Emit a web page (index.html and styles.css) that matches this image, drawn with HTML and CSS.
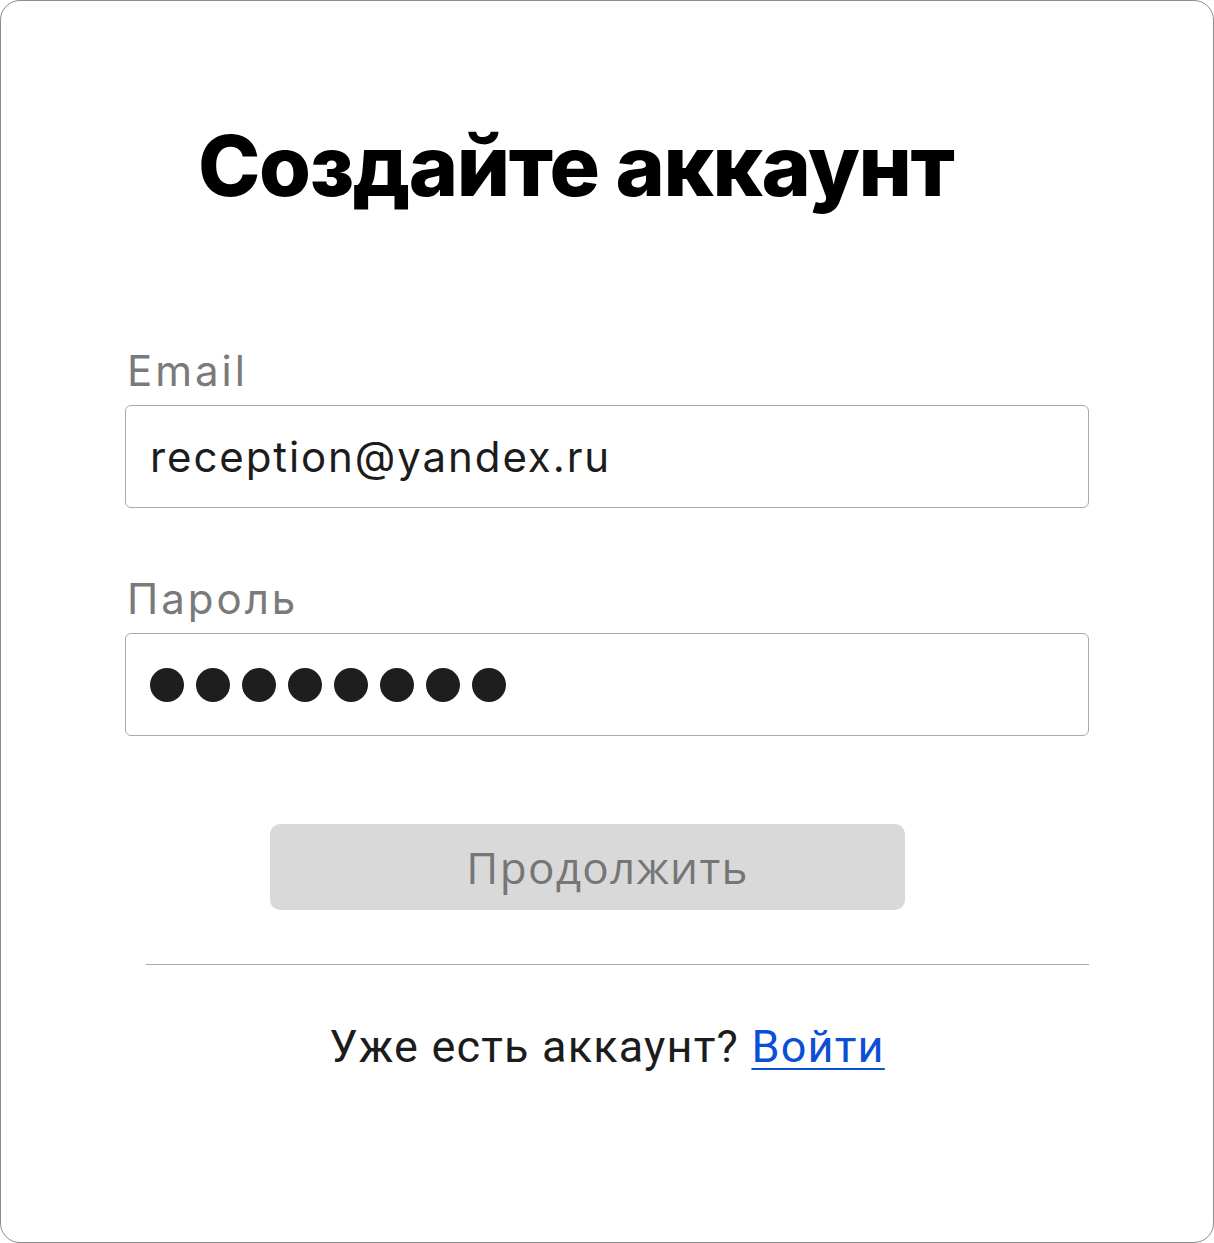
FILE: index.html
```html
<!DOCTYPE html>
<html lang="ru">
<head>
<meta charset="utf-8">
<link rel="stylesheet" href="styles.css">
</head>
<body>
<div class="card">
  <h1 class="title">Создайте аккаунт</h1>
  <form class="form">
    <label class="field">
      <span class="label">Email</span>
      <div class="input">reception@yandex.ru</div>
    </label>
    <label class="field field-pass">
      <span class="label">Пароль</span>
      <div class="input dots">
        <span class="dot"></span><span class="dot"></span><span class="dot"></span><span class="dot"></span><span class="dot"></span><span class="dot"></span><span class="dot"></span><span class="dot"></span>
      </div>
    </label>
    <div class="actions">
      <button type="button" class="btn">Продолжить</button>
    </div>
  </form>
  <hr class="divider">
  <p class="footer">Уже есть аккаунт? <a href="#" class="link">Войти</a></p>
</div>
</body>
</html>
```

FILE: styles.css
```css
html, body {
  margin: 0;
  padding: 0;
  background: #ffffff;
}
body {
  font-family: "Inter", "Noto Sans", sans-serif;
}
.card {
  box-sizing: border-box;
  width: 1214px;
  height: 1243px;
  border: 1px solid #8c8c8c;
  border-radius: 20px;
  padding: 0 124px 0 124px;
  display: flex;
  flex-direction: column;
}
.title {
  margin: 115px 0 0 73px;
  font-family: "Inter", sans-serif;
  font-weight: 800;
  font-size: 84px;
  line-height: 100px;
  color: #000;
  letter-spacing: -1.4px;
}
.form {
  display: flex;
  flex-direction: column;
  margin-top: 127px;
}
.field {
  display: flex;
  flex-direction: column;
}
.field-pass {
  margin-top: 63px;
}
.label {
  font-size: 42px;
  line-height: 56px;
  color: #7a7a7a;
  margin-left: 2px;
  letter-spacing: 3px;
}
.input {
  box-sizing: border-box;
  height: 103px;
  margin-top: 6px;
  border: 1px solid #a9a9a9;
  border-radius: 6px;
  padding: 0 24px;
  display: flex;
  align-items: center;
  font-size: 42px;
  color: #1c1c1c;
  letter-spacing: 1.9px;
}
.dots {
  gap: 12px;
}
.dot {
  width: 34px;
  height: 34px;
  border-radius: 50%;
  background: #1e1e1e;
}
.actions {
  display: flex;
  justify-content: flex-start;
  margin-top: 88px;
  padding-left: 145px;
}
.btn {
  box-sizing: border-box;
  width: 635px;
  height: 86px;
  border: none;
  border-radius: 10px;
  background: #d9d9d9;
  color: #767676;
  font-family: "Open Sans", sans-serif;
  font-size: 44px;
  font-weight: 400;
  padding: 0 0 0 40px;
  letter-spacing: 1.3px;
}
.divider {
  margin: 54px 0 0 21px;
  border: none;
  border-top: 1px solid #a9a9a9;
  height: 0;
}
.footer {
  margin: 52px 0 0 0;
  text-align: center;
  font-family: "Roboto", sans-serif;
  font-size: 45px;
  line-height: 60px;
  color: #1c1c1c;
  letter-spacing: 1.2px;
}
.link {
  color: #0a4fd4;
  text-decoration: underline;
  text-decoration-thickness: 2px;
  text-underline-offset: 6px;
}
```
